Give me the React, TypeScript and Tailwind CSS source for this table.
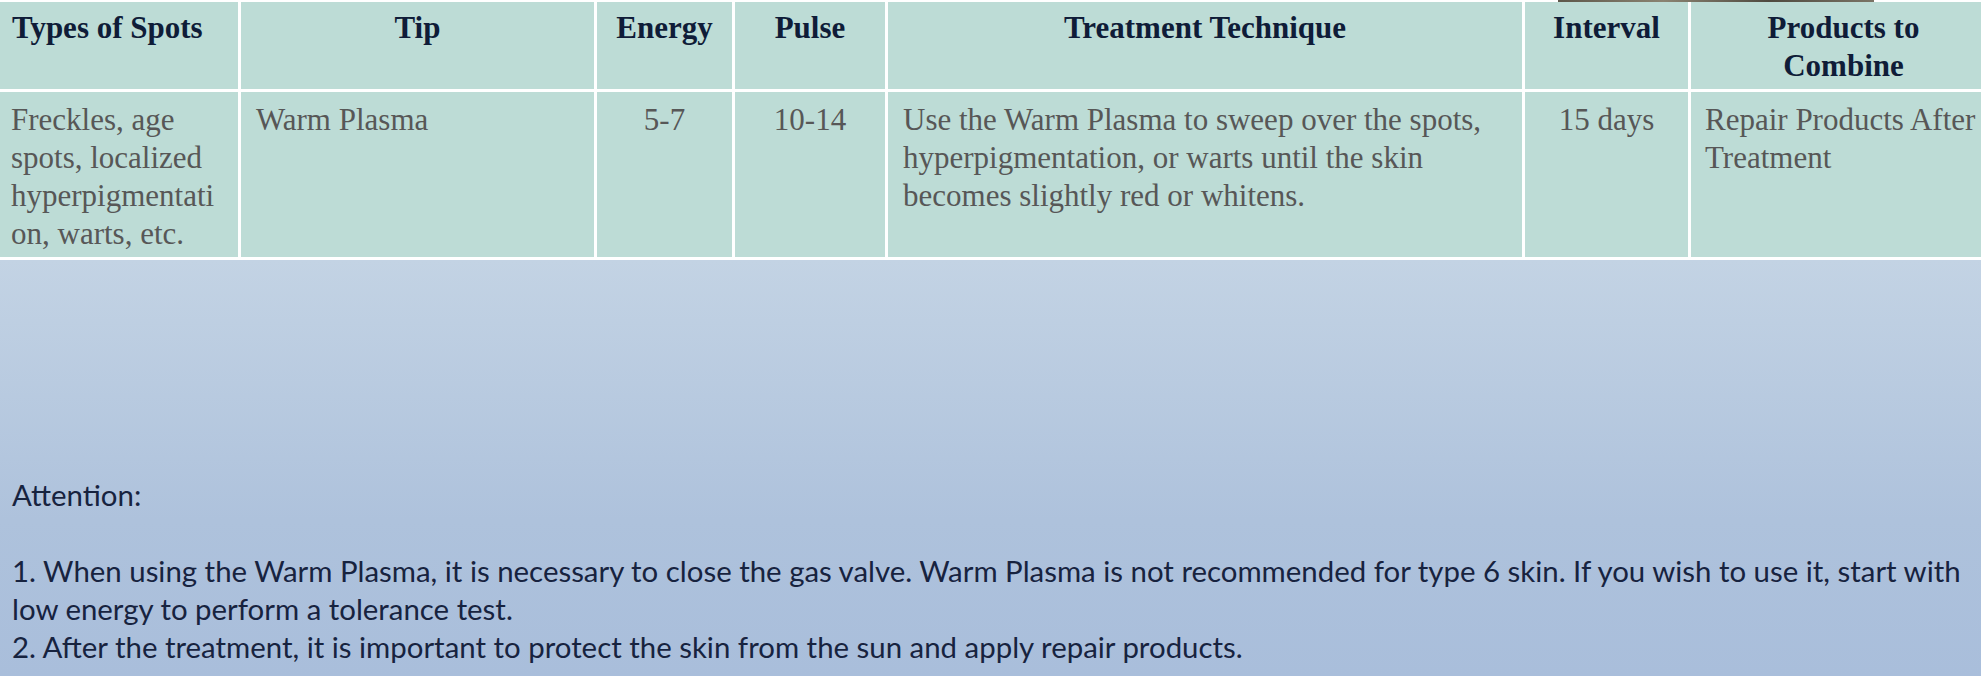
import React from "react";

const serif = "font-['Liberation_Serif','Times_New_Roman',serif]";

const columns = [
	{ title: "Types of Spots", width: "w-[238px]", head: "text-left pl-[12px]" },
	{ title: "Tip", width: "w-[353px]", head: "text-center" },
	{ title: "Energy", width: "w-[135px]", head: "text-center" },
	{ title: "Pulse", width: "w-[150px]", head: "text-center" },
	{ title: "Treatment Technique", width: "w-[634px]", head: "text-center" },
	{ title: "Interval", width: "w-[163px]", head: "text-center" },
	{ title: "Products to Combine", width: "w-[305px]", head: "text-center px-[20px]" },
];

const row = [
	{ text: "Freckles, age spots, localized hyperpigmentation, warts, etc.", cls: "text-left pl-[11px] pr-[16px] break-words" },
	{ text: "Warm Plasma", cls: "text-left px-[15px]" },
	{ text: "5-7", cls: "text-center" },
	{ text: "10-14", cls: "text-center" },
	{
		text: "Use the Warm Plasma to sweep over the spots, hyperpigmentation, or warts until the skin becomes slightly red or whitens.",
		cls: "text-left px-[15px]",
	},
	{ text: "15 days", cls: "text-center" },
	{ text: "Repair Products After Treatment", cls: "text-left pl-[14px] pr-[10px]" },
];

export default function App() {
	return (
		<div className="relative w-full h-[676px] overflow-hidden bg-[linear-gradient(to_bottom,#c6d6e6_0%,#c3d3e4_260px,#aec2dc_520px,#a9bedb_100%)]">
			{/* thin strip of a picture peeking in above the table */}
			<div className="absolute top-0 left-[1558px] w-[316px] h-[2px] bg-[linear-gradient(to_right,#5d574a,#8a8372,#4f4a40,#7a7466)]" />

			<div className="bg-white">
				<table
					className={`-ml-[3px] -mt-[1px] w-[2002px] table-fixed border-separate border-spacing-[3px] bg-white ${serif}`}
				>
					<colgroup>
						{columns.map((c) => (
							<col key={c.title} className={c.width} />
						))}
					</colgroup>
					<thead>
						<tr>
							{columns.map((c) => (
								<th
									key={c.title}
									className={`h-[87px] align-top bg-[#bddcd6] pt-[7px] text-[31px] leading-[38px] font-bold text-[#0f1c38] ${c.head}`}
								>
									{c.title}
								</th>
							))}
						</tr>
					</thead>
					<tbody>
						<tr>
							{row.map((c, i) => (
								<td
									key={i}
									className={`h-[165px] align-top bg-[#bddcd6] pt-[9px] pb-[3px] text-[31px] leading-[38px] text-[#575757] ${c.cls}`}
								>
									{c.text}
								</td>
							))}
						</tr>
					</tbody>
				</table>
			</div>

			<div className="pt-[216px] pl-[12px] pr-[12px] text-[29.4px] leading-[38px] text-[#17233f] font-['Lato','Liberation_Sans',sans-serif]">
				<p>Attention:</p>
				<p className="h-[38px]" />
				<p>
					1. When using the Warm Plasma, it is necessary to close the gas valve. Warm Plasma is not
					recommended for type 6 skin. If you wish to use it, start with low energy to perform a
					tolerance test.
				</p>
				<p>2. After the treatment, it is important to protect the skin from the sun and apply repair products.</p>
			</div>
		</div>
	);
}
